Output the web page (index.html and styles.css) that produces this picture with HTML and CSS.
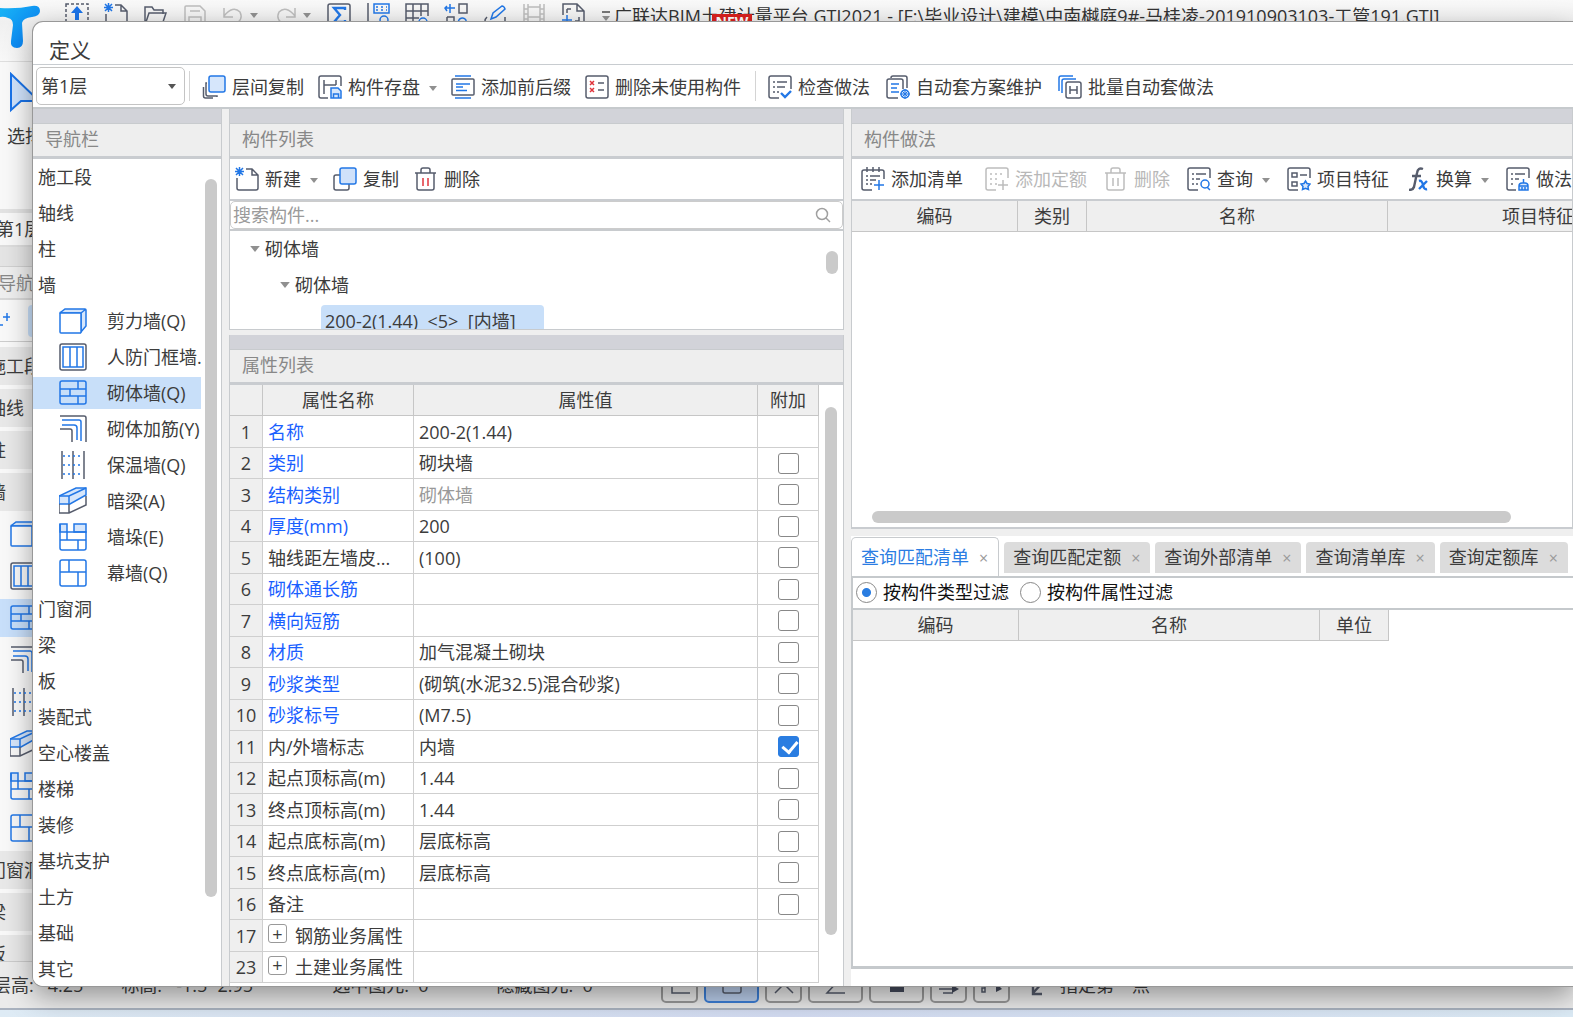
FILE: index.html
```html
<!DOCTYPE html>
<html lang="zh-CN">
<head>
<meta charset="utf-8">
<title>定义</title>
<link rel="stylesheet" href="styles.css">
</head>
<body>
<svg class="sprite" aria-hidden="true">
  <symbol id="caret" viewBox="0 0 8 5"><path d="M0 0h8L4 5z" fill="currentColor"/></symbol>
  <symbol id="floor-copy" viewBox="0 0 24 24"><path d="M5 8H4v11q0 2 2 2h9v1M1.500 12v9q0 2 2 2H11" class="g"/><rect x="7" y="1" width="16" height="16" rx="2" class="b f"/></symbol>
  <symbol id="store" viewBox="0 0 24 24"><path d="M10 23H3q-2 0-2-2V3q0-2 2-2h18q2 0 2 2v8M6 5v14M6 10h12M18 5v5" class="g"/><path d="M13 13h7l3 3v7H13zM15.500 23v-4h5v4" class="b f"/></symbol>
  <symbol id="affix" viewBox="0 0 24 24"><rect x="1" y="4" width="22" height="16" rx="1" class="g"/><path d="M4 1h16M4 23h16M5 9h14M5 12h7M5 15.500h11" class="b"/></symbol>
  <symbol id="unused" viewBox="0 0 24 24"><rect x="1" y="1" width="22" height="22" rx="2" class="g"/><path d="M5 6l4 4M9 6l-4 4M5 13l4 4M9 13l-4 4" class="r"/><path d="M13 8h6M13 15h6" class="g"/></symbol>
  <symbol id="check-list" viewBox="0 0 24 24"><path d="M11 23H3q-2 0-2-2V3q0-2 2-2h18q2 0 2 2v11M5 7h2M9 7h10M5 12h2M9 12h8M5 17h2M9 17h2" class="g"/><path d="M13 18l4 4 6-6" class="b w"/></symbol>
  <symbol id="scheme" viewBox="0 0 24 24"><path d="M5 3q0-2 2-2h12q2 0 2 2v10M12 23H3q-2 0-2-2V6q0-2 2-2h12q2 0 2 2v8" class="g"/><path d="M5 9h8M5 13h6M5 17h8" class="b"/><circle cx="19" cy="19" r="4" class="b f"/><path d="M19 14v10M14 19h10M16 16l6 6M22 16l-6 6" class="b t"/></symbol>
  <symbol id="batch" viewBox="0 0 24 24"><path d="M1 16V3q0-2 2-2h12M4 18V6q0-2 2-2h12" class="b"/><rect x="8" y="7" width="15" height="16" rx="2" class="g"/><path d="M12 11v8M19 11v8M12 15h7" class="g"/></symbol>
  <symbol id="new" viewBox="0 0 24 24"><path d="M2 11v10q0 2 2 2h17q2 0 2-2V8l-6-6h-6M17 2v6h6" class="g"/><path d="M1 1l7 7M8 1L1 8M4.500 0v9M0 4.500h9" class="b"/></symbol>
  <symbol id="copy" viewBox="0 0 24 24"><path d="M7 8H3Q1 8 1 10v11q0 2 2 2h11q2 0 2-2v-4" class="g"/><rect x="7" y="1" width="16" height="16" rx="2" class="b f2"/></symbol>
  <symbol id="trash" viewBox="0 0 24 24"><path d="M1 6h21M7 6V3q0-2 2-2h5q2 0 2 2v3M3 6v15q0 2 2 2h13q2 0 2-2V6" class="g"/><path d="M9 11v8M14 11v8" class="r"/></symbol>
  <symbol id="trash-off" viewBox="0 0 24 24"><path d="M1 6h21M7 6V3q0-2 2-2h5q2 0 2 2v3M3 6v15q0 2 2 2h13q2 0 2-2V6M9 11v8M14 11v8" class="c"/></symbol>
  <symbol id="add-list" viewBox="0 0 24 24"><path d="M11 23H3q-2 0-2-2V5q0-2 2-2h18q2 0 2 2v7M6 0v5M12 0v5M18 0v5M5 9h2M9 9h10M5 13h2M9 13h6M5 17h2M9 17h2" class="g"/><path d="M13 18h10M18 13v10" class="b"/></symbol>
  <symbol id="add-quota" viewBox="0 0 24 24"><path d="M11 23H3q-2 0-2-2V3q0-2 2-2h18q2 0 2 2v8M5 7h2M10 7h2M15 7h2M5 12h2M10 12h2M5 17h2M10 17h2M13 18h10M18 13v10" class="c"/></symbol>
  <symbol id="query" viewBox="0 0 24 24"><path d="M11 23H3q-2 0-2-2V3q0-2 2-2h18q2 0 2 2v8M5 7h2M9 7h10M5 12h2M9 12h4M5 17h2M9 17h2" class="g"/><circle cx="18" cy="17" r="4" class="b"/><path d="M20 20l3 3" class="b"/></symbol>
  <symbol id="feature" viewBox="0 0 24 24"><path d="M11 23H3q-2 0-2-2V3q0-2 2-2h18q2 0 2 2v8M5 6h5v4H5zM5 15h5v4H5zM13 8h7" class="g"/><path d="M18.500 14l1.500 2.500 3 .5-2 2.500.500 3-3-1.200-3 1.200.5-3-2-2.500 3-.5z" class="b f"/></symbol>
  <symbol id="fx" viewBox="0 0 24 24"><path d="M17 2q-5-2-6 4L8 20q-1 3-5 3M6 9h9" class="g w"/><path d="M13 14q3-1 4 4t4 4M21 14l-8 8" class="b w"/></symbol>
  <symbol id="practice" viewBox="0 0 24 24"><path d="M10 23H3q-2 0-2-2V3q0-2 2-2h18q2 0 2 2v8M5 7h2M9 7h10M5 12h2M9 12h4M5 17h2" class="g"/><path d="M17.500 12v4M13 19q0-3 3-3h3q3 0 3 3zM13 19v4h9v-4M16 23v-3M19 23v-3" class="b f"/></symbol>
  <symbol id="search" viewBox="0 0 16 16"><circle cx="7" cy="7" r="5.500" class="m"/><path d="M11 11l4 4" class="m"/></symbol>

  <symbol id="w-shear" viewBox="0 0 28 28"><path d="M1 6q0-1 1-1l4-3h20q1 0 1 1v16l-5 6V6zM22 6l5-4" class="b f"/><rect x="1" y="6" width="21" height="20" rx="1" class="b" style="fill:#fff"/></symbol>
  <symbol id="w-door" viewBox="0 0 28 28"><rect x="1" y="1" width="26" height="26" rx="2" class="g"/><path d="M4 4h20v20H4zM11 4v20M18 4v20" class="b"/></symbol>
  <symbol id="w-brick" viewBox="0 0 28 28"><rect x="1" y="2" width="26" height="23" rx="2" class="b"/><path d="M1 10h26M1 17h26M19 2v8M11 10v7M21 10v0M19 17v8" class="b"/></symbol>
  <symbol id="w-rebar" viewBox="0 0 28 28"><path d="M1 1h24q2 0 2 2v24M1 14h10q2 0 2 2v11" class="g"/><path d="M3 5h17q2 0 2 2v19M3 10h12q3 0 3 3v12" class="b"/></symbol>
  <symbol id="w-insul" viewBox="0 0 28 28"><path d="M3 0v28M14 0v28M25 0v28" class="g"/><path d="M4 5h20M4 14h20M4 23h20" class="b dot"/></symbol>
  <symbol id="w-beam" viewBox="0 0 28 28"><path d="M0 9l17-8h10v7l-16 9H0z" class="b f"/><path d="M0 9h10L27 1M10 9v8" class="b"/><path d="M0 17v9h10l17-8V9M10 17v9" class="g"/></symbol>
  <symbol id="w-pier" viewBox="0 0 28 28"><path d="M1 1h7v8H1zM15 1h12v8H15z" class="b f"/><path d="M1 1v24q0 2 2 2h22q2 0 2-2V9H8v8M1 17h26M19 17v10" class="b"/></symbol>
  <symbol id="w-curtain" viewBox="0 0 28 28"><rect x="1" y="1" width="26" height="26" rx="2" class="b"/><path d="M1 13h26M10 1v12M19 13v14" class="b"/></symbol>

  <symbol id="q-up" viewBox="0 0 24 24"><rect x="1" y="1" width="22" height="22" class="g dash"/><path d="M12 3l6 7h-4v7h-4v-7H6z" fill="#1a73e8"/></symbol>
  <symbol id="q-open" viewBox="0 0 24 24"><path d="M2 22V4h7l2 3h9v4M2 22l4-12h17l-4 12z" class="g"/></symbol>
  <symbol id="q-save" viewBox="0 0 24 24"><path d="M3 4q0-1 1-1h14l5 5v15H3zM8 8h10M7 23v-9h12v9" class="c"/></symbol>
  <symbol id="q-undo" viewBox="0 0 24 24"><path d="M3 5v9h9M3 13q9-11 16-4 4 8-6 13" class="c"/></symbol>
  <symbol id="q-redo" viewBox="0 0 24 24"><path d="M21 5v9h-9M21 13q-9-11-16-4-4 8 6 13" class="c"/></symbol>
  <symbol id="q-sum" viewBox="0 0 24 24"><rect x="1" y="1" width="22" height="22" rx="2" class="g"/><path d="M18 7V5H7l6 7-6 7h11v-2" class="b w"/></symbol>
  <symbol id="q-calc" viewBox="0 0 24 24"><path d="M2 0v21h10" class="g"/><path d="M8 1h15v9H8z" class="b"/><path d="M10 4h11M10 7h11" class="b dot"/><circle cx="18" cy="17" r="4" class="b"/></symbol>
  <symbol id="q-grid" viewBox="0 0 24 24"><path d="M12 22H1V1h22v12M1 8h22M1 15h13M8 1v21M16 1v12" class="g"/><circle cx="18" cy="19" r="4" class="b"/></symbol>
  <symbol id="q-move" viewBox="0 0 24 24"><path d="M15 1h8v9h-8zM3 14h7v8M3 14v8" class="g"/><path d="M1 5h10M6 1v9M3 3L1 5l2 3M18 23a4 4 0 1 1 3-1" class="b"/></symbol>
  <symbol id="q-pen" viewBox="0 0 24 24"><path d="M8 16l2-6 9-7q2 0 3 3l-9 8z" class="b"/><path d="M4 14q-4 4 0 6h18M22 14v5" class="g"/></symbol>
  <symbol id="q-film" viewBox="0 0 24 24"><path d="M2 1v22M6 1v22M18 1v22M22 1v22M6 4h12M6 14h12M2 6h4M2 11h4M2 16h4M18 6h4M18 11h4M18 16h4" class="c"/></symbol>
  <symbol id="q-page" viewBox="0 0 24 24"><path d="M2 12V1h14l7 7v15h-6M16 1v7h7M6 6h4M6 6v4M18 14v4h-4" class="g"/><path d="M1 17h10M6 12v10" class="b"/></symbol>
</svg>

<div class="app">
  <header class="app-top">
    <svg class="logo" viewBox="0 0 42 50"><defs><linearGradient id="lg" x1="0" y1="0" x2="1" y2="1"><stop offset="0" stop-color="#19b5f5"/><stop offset="1" stop-color="#0877f2"/></linearGradient></defs><path d="M0 8q18 1 32-2 8-1 8 5 0 5-8 6-9 1-10 6l1 18q0 7-6 7-7 0-6-7l2-16q0-6-5-7-4-2-8-1z" fill="url(#lg)"/></svg>
    <nav class="quick" aria-label="快速访问">
      <svg><use href="#q-up"/></svg><svg><use href="#new"/></svg><svg><use href="#q-open"/></svg><svg><use href="#q-save"/></svg>
      <span class="undo"><svg><use href="#q-undo"/></svg><svg class="caret"><use href="#caret"/></svg></span>
      <span class="undo"><svg><use href="#q-redo"/></svg><svg class="caret"><use href="#caret"/></svg></span>
      <svg><use href="#q-sum"/></svg><svg><use href="#q-calc"/></svg><svg><use href="#q-grid"/></svg><svg><use href="#q-move"/></svg><svg><use href="#q-pen"/></svg><svg><use href="#q-film"/></svg><svg><use href="#q-page"/></svg>
    </nav>
    <div class="app-title"><span class="more"><svg class="caret"><use href="#caret"/></svg></span>广联达BIM土建计量平台 GTJ2021 - [F:\毕业设计\建模\中南樾庭9#-马桂凌-201910903103-工管191.GTJ]<span class="new-badge">NEW</span></div>
  </header>
  <div class="app-ribbon">
    <svg viewBox="0 0 36 42"><path d="M2 2v36l10-9h18z" fill="#cfe2fb" stroke="#1a73e8" stroke-width="2"/></svg>
    <span>选择</span>
  </div>
  <aside class="app-side">
    <div class="side-floor">第1层</div>
    <div class="side-strip"></div>
    <div class="side-head">导航栏</div>
    <div class="side-tools"><svg viewBox="0 0 16 20"><path d="M9 6h8M13 2v8M1 14h8M5 10v8" class="b"/></svg><i></i></div>
    <ul class="side-list">
      <li>施工段</li><li>轴线</li><li>柱</li><li>墙</li>
      <li class="pic"><svg><use href="#w-shear"/></svg></li>
      <li class="pic"><svg><use href="#w-door"/></svg></li>
      <li class="pic on"><svg><use href="#w-brick"/></svg></li>
      <li class="pic"><svg><use href="#w-rebar"/></svg></li>
      <li class="pic"><svg><use href="#w-insul"/></svg></li>
      <li class="pic"><svg><use href="#w-beam"/></svg></li>
      <li class="pic"><svg><use href="#w-pier"/></svg></li>
      <li class="pic"><svg><use href="#w-curtain"/></svg></li>
      <li>门窗洞</li><li>梁</li><li>板</li>
    </ul>
  </aside>
  <footer class="app-status">
    <div class="readouts"><span>层高:&nbsp;&nbsp; 4.25</span><span>标高:&nbsp;&nbsp; -1.5~2.95</span><span>选中图元:&nbsp; 0</span><span>隐藏图元:&nbsp; 0</span></div>
    <div class="modes">
      <button type="button" aria-label="正交"><svg viewBox="0 0 24 24"><path d="M4 2v18h18M4 12h16" class="g"/></svg></button>
      <button type="button" class="wide on" aria-label="捕捉"><svg viewBox="0 0 24 24"><rect x="3" y="3" width="18" height="17" rx="2" class="g"/></svg></button>
      <button type="button" aria-label="交点"><svg viewBox="0 0 24 24"><path d="M3 20l9-9 9 9" class="g"/></svg></button>
      <button type="button" class="wide" aria-label="角度"><svg viewBox="0 0 24 24"><path d="M18 4L3 20h18" class="g"/></svg></button>
      <button type="button" class="wide" aria-label="显示"><svg viewBox="0 0 24 24"><path d="M5 12h14v7H5z" fill="#454b5c"/></svg></button>
      <button type="button" aria-label="图层"><svg viewBox="0 0 24 24"><path d="M2 12h13M2 16h13M6 20h10" class="g"/><path d="M15 12l7 4-7 4z" fill="#454b5c"/></svg></button>
      <button type="button" aria-label="选择"><svg viewBox="0 0 24 24"><path d="M5 12v7H2v-4h3" class="g"/><path d="M16 10l6 6-6 3z" fill="#454b5c"/></svg></button>
    </div>
    <div class="hint"><svg viewBox="0 0 16 24"><path d="M14 8L3 20M3 10v11h9" class="g w"/></svg>指定第一点</div>
  </footer>
  <div class="taskbar"></div>
</div>

<main class="dialog" role="dialog" aria-labelledby="dlg-title">
  <h1 id="dlg-title">定义</h1>
  <div class="toolbar main-tools">
    <div class="select"><select aria-label="楼层"><option>第1层</option></select><svg class="caret"><use href="#caret"/></svg></div>
    <span class="sep"></span>
    <button type="button" class="tool"><svg><use href="#floor-copy"/></svg>层间复制</button>
    <button type="button" class="tool"><svg><use href="#store"/></svg>构件存盘<svg class="caret"><use href="#caret"/></svg></button>
    <button type="button" class="tool"><svg><use href="#affix"/></svg>添加前后缀</button>
    <button type="button" class="tool"><svg><use href="#unused"/></svg>删除未使用构件</button>
    <span class="sep"></span>
    <div class="tool-group">
      <button type="button" class="tool"><svg><use href="#check-list"/></svg>检查做法</button>
      <button type="button" class="tool"><svg><use href="#scheme"/></svg>自动套方案维护</button>
      <button type="button" class="tool"><svg><use href="#batch"/></svg>批量自动套做法</button>
    </div>
  </div>

  <div class="work">
    <section class="panel nav">
      <div class="strip"></div>
      <h2>导航栏</h2>
      <div class="nav-body">
        <ul class="nav-list">
          <li>施工段</li><li>轴线</li><li>柱</li><li>墙</li>
          <li class="child"><svg><use href="#w-shear"/></svg>剪力墙(Q)</li>
          <li class="child"><svg><use href="#w-door"/></svg>人防门框墙...</li>
          <li class="child on"><svg><use href="#w-brick"/></svg>砌体墙(Q)</li>
          <li class="child"><svg><use href="#w-rebar"/></svg>砌体加筋(Y)</li>
          <li class="child"><svg><use href="#w-insul"/></svg>保温墙(Q)</li>
          <li class="child"><svg><use href="#w-beam"/></svg>暗梁(A)</li>
          <li class="child"><svg><use href="#w-pier"/></svg>墙垛(E)</li>
          <li class="child"><svg><use href="#w-curtain"/></svg>幕墙(Q)</li>
          <li>门窗洞</li><li>梁</li><li>板</li><li>装配式</li><li>空心楼盖</li><li>楼梯</li><li>装修</li><li>基坑支护</li><li>土方</li><li>基础</li><li>其它</li>
        </ul>
        <div class="bar nav-bar"></div>
      </div>
    </section>

    <div class="middle">
      <section class="panel">
        <div class="strip"></div>
        <h2>构件列表</h2>
        <div class="toolbar sub-tools">
          <button type="button" class="tool"><svg><use href="#new"/></svg>新建<svg class="caret"><use href="#caret"/></svg></button>
          <button type="button" class="tool"><svg><use href="#copy"/></svg>复制</button>
          <button type="button" class="tool"><svg><use href="#trash"/></svg>删除</button>
        </div>
        <label class="search"><input type="text" placeholder="搜索构件..." aria-label="搜索构件"><svg><use href="#search"/></svg></label>
        <div class="tree">
          <ul>
            <li><svg class="caret"><use href="#caret"/></svg>砌体墙</li>
            <li class="l2"><svg class="caret"><use href="#caret"/></svg>砌体墙</li>
            <li class="l3"><span>200-2(1.44)&nbsp; &lt;5&gt;&nbsp; [内墙]</span></li>
          </ul>
          <div class="bar tree-bar"></div>
        </div>
      </section>

      <section class="panel props">
        <div class="strip"></div>
        <h2>属性列表</h2>
        <div class="props-body">
          <table class="grid">
            <colgroup><col class="c-no"><col class="c-name"><col><col class="c-add"></colgroup>
            <thead><tr><th></th><th>属性名称</th><th>属性值</th><th>附加</th></tr></thead>
            <tbody>
              <tr><th>1</th><td class="key">名称</td><td>200-2(1.44)</td><td></td></tr>
              <tr><th>2</th><td class="key">类别</td><td>砌块墙</td><td><input type="checkbox" aria-label="类别"></td></tr>
              <tr><th>3</th><td class="key">结构类别</td><td class="dim">砌体墙</td><td><input type="checkbox" aria-label="结构类别"></td></tr>
              <tr><th>4</th><td class="key">厚度(mm)</td><td>200</td><td><input type="checkbox" aria-label="厚度"></td></tr>
              <tr><th>5</th><td>轴线距左墙皮...</td><td>(100)</td><td><input type="checkbox" aria-label="轴线距左墙皮"></td></tr>
              <tr><th>6</th><td class="key">砌体通长筋</td><td></td><td><input type="checkbox" aria-label="砌体通长筋"></td></tr>
              <tr><th>7</th><td class="key">横向短筋</td><td></td><td><input type="checkbox" aria-label="横向短筋"></td></tr>
              <tr><th>8</th><td class="key">材质</td><td>加气混凝土砌块</td><td><input type="checkbox" aria-label="材质"></td></tr>
              <tr><th>9</th><td class="key">砂浆类型</td><td>(砌筑(水泥32.5)混合砂浆)</td><td><input type="checkbox" aria-label="砂浆类型"></td></tr>
              <tr><th>10</th><td class="key">砂浆标号</td><td>(M7.5)</td><td><input type="checkbox" aria-label="砂浆标号"></td></tr>
              <tr><th>11</th><td>内/外墙标志</td><td>内墙</td><td><input type="checkbox" checked aria-label="内/外墙标志"></td></tr>
              <tr><th>12</th><td>起点顶标高(m)</td><td>1.44</td><td><input type="checkbox" aria-label="起点顶标高"></td></tr>
              <tr><th>13</th><td>终点顶标高(m)</td><td>1.44</td><td><input type="checkbox" aria-label="终点顶标高"></td></tr>
              <tr><th>14</th><td>起点底标高(m)</td><td>层底标高</td><td><input type="checkbox" aria-label="起点底标高"></td></tr>
              <tr><th>15</th><td>终点底标高(m)</td><td>层底标高</td><td><input type="checkbox" aria-label="终点底标高"></td></tr>
              <tr><th>16</th><td>备注</td><td></td><td><input type="checkbox" aria-label="备注"></td></tr>
              <tr><th>17</th><td><button type="button" class="expand">+</button>钢筋业务属性</td><td></td><td></td></tr>
              <tr><th>23</th><td><button type="button" class="expand">+</button>土建业务属性</td><td></td><td></td></tr>
            </tbody>
          </table>
          <div class="bar props-bar"></div>
        </div>
      </section>
    </div>

    <div class="right">
      <section class="panel practice">
        <div class="strip"></div>
        <h2>构件做法</h2>
        <div class="toolbar practice-tools">
          <button type="button" class="tool first"><svg><use href="#add-list"/></svg>添加清单</button>
          <button type="button" class="tool" disabled><svg><use href="#add-quota"/></svg>添加定额</button>
          <button type="button" class="tool" disabled><svg><use href="#trash-off"/></svg>删除</button>
          <button type="button" class="tool"><svg><use href="#query"/></svg>查询<svg class="caret"><use href="#caret"/></svg></button>
          <button type="button" class="tool"><svg><use href="#feature"/></svg>项目特征</button>
          <button type="button" class="tool"><svg><use href="#fx"/></svg>换算<svg class="caret"><use href="#caret"/></svg></button>
          <button type="button" class="tool"><svg><use href="#practice"/></svg>做法刷</button>
        </div>
        <table class="grid bill">
          <colgroup><col class="b-code"><col class="b-kind"><col class="b-name"><col class="b-name"></colgroup>
          <thead><tr><th>编码</th><th>类别</th><th>名称</th><th>项目特征</th></tr></thead>
        </table>
        <div class="bar wide-bar"></div>
      </section>

      <section class="queries">
        <div class="tabs" role="tablist">
          <button type="button" role="tab" aria-selected="true">查询匹配清单<span>×</span></button>
          <button type="button" role="tab">查询匹配定额<span>×</span></button>
          <button type="button" role="tab">查询外部清单<span>×</span></button>
          <button type="button" role="tab">查询清单库<span>×</span></button>
          <button type="button" role="tab">查询定额库<span>×</span></button>
        </div>
        <div class="query-page">
          <div class="filters">
            <label><input type="radio" name="filter" checked>按构件类型过滤</label>
            <label><input type="radio" name="filter">按构件属性过滤</label>
          </div>
          <table class="grid match">
            <colgroup><col class="b-code"><col class="b-name"><col class="b-kind"></colgroup>
            <thead><tr><th>编码</th><th>名称</th><th>单位</th></tr></thead>
          </table>
        </div>
      </section>
    </div>
  </div>
</main>
</body>
</html>
```
FILE: styles.css
```css
* { box-sizing: border-box; }

body {
  margin: 0;
  height: 100vh;
  overflow: hidden;
  position: relative;
  font: 18px/24px "Open Sans", "Noto Sans CJK SC", sans-serif;
  color: #3c3c3c;
  background: #f8f8f8;
}

ul { list-style: none; margin: 0; padding: 0; }
button, input, select { font: inherit; color: inherit; margin: 0; }
button { border: 0; background: none; padding: 0; white-space: nowrap; }

.sprite { position: absolute; width: 0; height: 0; }
svg { flex: none; width: 24px; height: 24px; }
.g, .b, .r, .c, .m { fill: none; stroke-width: 1.5; }
.g { stroke: #565c6c; }
.b { stroke: #2277e6; }
.r { stroke: #e0343c; }
.c { stroke: #bdbdbd; }
.m { stroke: #a0a0a0; }
.f { fill: #d6e6fb; }
.f2 { fill: #cfe1fa; }
.w { stroke-width: 2.4; }
.t { stroke-width: 1; }
.dot { stroke-dasharray: 2 3; }
.dash { stroke-dasharray: 3 2; }
svg.caret { width: 8px; height: 5px; color: #909090; }

/* ---- application window behind the dialog ---- */
.app { height: 100%; display: flex; flex-direction: column; }
.app-top {
  flex: none;
  height: 62px;
  display: flex;
  align-items: flex-start;
  background: linear-gradient(#f9f9f9, #f0f0f0 22px, #f8f8f8);
  border-bottom: 1px solid #dedede;
}
.logo { width: 42px; height: 50px; }
.quick { display: flex; gap: 15px; padding: 3px 0 0 23px; }
.undo { display: flex; align-items: center; gap: 5px; width: 38px; }
.app-title {
  position: relative;
  display: flex;
  align-items: center;
  white-space: pre;
  padding: 4px 0 0 17px;
  color: #333;
}
.more { border-top: 2px solid #777; padding-top: 3px; margin-right: 4px; display: flex; }
.new-badge {
  position: absolute;
  left: 127px;
  top: 14px;
  width: 40px;
  height: 20px;
  line-height: 15px;
  background: #d9211e;
  color: #fff;
  font-size: 14px;
  font-weight: 700;
  text-align: center;
}
.app-ribbon {
  flex: none;
  height: 151px;
  display: flex;
  flex-direction: column;
  gap: 10px;
  padding: 10px 7px;
  border-bottom: 4px solid #e2e2e2;
}
.app-ribbon svg { width: 36px; height: 42px; margin-left: 2px; }
.app-side { flex: 1; min-height: 0; overflow: hidden; margin-left: -12px; width: 230px; }
.side-floor { height: 34px; line-height: 32px; padding-left: 8px; border-bottom: 2px solid #ddd; }
.side-strip { height: 20px; background: #e4e4e4; border-bottom: 1px solid #d0d0d0; }
.side-head { height: 33px; line-height: 32px; padding-left: 10px; color: #888; background: #eee; border-bottom: 2px solid #d8d8d8; }
.side-tools { height: 42px; display: flex; align-items: center; gap: 18px; padding-left: 6px; border-bottom: 1px solid #ccc; }
.side-tools svg { width: 16px; height: 20px; }
.side-tools i { width: 32px; height: 32px; border-radius: 4px; background: #c8dffa; }
.side-list { padding-top: 5px; }
.side-list li { height: 38px; line-height: 38px; margin-bottom: 4px; background: #e8e8e8; }
.side-list .pic { display: flex; align-items: center; padding-left: 22px; background: none; }
.side-list .pic svg { width: 28px; height: 28px; }
.side-list .on { background: #c8dffa; }
.app-status {
  flex: none;
  height: 49px;
  display: flex;
  align-items: center;
  background: #ebebeb;
  border-top: 1px solid #ccc;
  border-bottom: 2px solid #a9b2bf;
}
.readouts { display: flex; gap: 38px; width: 661px; margin-left: -12px; padding-left: 5px; white-space: nowrap; flex: none; }
.readouts span:nth-child(3) { margin-left: 41px; }
.readouts span:nth-child(4) { margin-left: 30px; }
.modes { display: flex; gap: 6px; padding-left: 12px; }
.modes button { width: 37px; height: 36px; display: flex; justify-content: center; align-items: center; border: 2px solid #999; border-radius: 5px; }
.modes .wide { width: 55px; }
.modes .on { border-color: #3c7fd8; background: #bcd0ee; }
.hint { display: flex; align-items: center; gap: 14px; padding-left: 20px; white-space: nowrap; }
.hint svg { width: 16px; }
.taskbar { flex: none; height: 7px; background: linear-gradient(90deg, #deebf5, #d3dcf2 50%, #dcebf6); }

/* ---- definition dialog ---- */
.dialog {
  position: absolute;
  inset: 22px 0 31px 33px;
  display: flex;
  flex-direction: column;
  overflow: hidden;
  background: #fff;
  border-radius: 10px 0 0 10px;
  box-shadow: 0 0 0 1px #989898, 0 10px 28px rgba(0, 0, 0, .38);
}
h1 {
  flex: none;
  height: 43px;
  margin: 0;
  padding: 14px 16px 0;
  border-bottom: 1px solid #c8ccd0;
  font-size: 21px;
  line-height: 28px;
  font-weight: 400;
}
.toolbar { flex: none; display: flex; align-items: center; }
.main-tools { height: 44px; gap: 14px; border-bottom: 2px solid #c6cacd; padding-left: 3px; }
.tool { display: flex; align-items: center; gap: 6px; }
.main-tools .tool { padding-top: 2px; }
.tool .caret { margin: 2px 0 0 3px; }
.tool:disabled { color: #b8b8b8; }
.tool-group { display: flex; gap: 16px; }
.sep { width: 1px; height: 30px; background: #d4d4d4; }
.main-tools .select + .sep { margin: 0 -2px 0 -10px; }
.sep:has(+ .tool-group) { margin-right: -2px; }
.select { position: relative; width: 149px; }
.select select {
  display: block;
  width: 100%;
  height: 38px;
  padding: 0 4px;
  appearance: none;
  border: 1px solid #c4c4c4;
  border-radius: 5px;
  background: #fff;
}
.select .caret { position: absolute; right: 9px; top: 17px; color: #555; }

.work {
  flex: 1;
  min-height: 0;
  display: grid;
  grid-template-columns: 189px 615px minmax(0, 1fr);
  column-gap: 7px;
  background: #efefef;
}
.panel { display: flex; flex-direction: column; background: #fff; border: solid #c8cbce; border-width: 0 1px; min-height: 0; }
.strip { flex: none; height: 15px; background: #d2d3d9; border-bottom: 1px solid #c8cbce; }
h2 {
  flex: none;
  height: 35px;
  margin: 0;
  padding-left: 12px;
  font-size: 18px;
  line-height: 31px;
  font-weight: 400;
  color: #888;
  background: #eee;
  border-bottom: 3px solid #c9ccd0;
}
.bar { flex: none; background: #cacaca; border-radius: 6px; }

.nav { border-left: 0; }
.nav-body { flex: 1; min-height: 0; display: flex; gap: 4px; overflow: hidden; }
.nav-list { width: 168px; }
.nav-list li { height: 32px; line-height: 32px; margin: 2px 0 4px; padding-left: 5px; white-space: nowrap; }
.nav-list .child { display: flex; align-items: center; gap: 20px; padding-left: 26px; overflow: hidden; }
.nav-list svg { width: 28px; height: 28px; }
.nav-list .on { background: #c8dff9; }
.nav-bar { width: 12px; height: 718px; margin-top: 20px; }

.middle, .right { display: flex; flex-direction: column; min-height: 0; min-width: 0; }
.middle { gap: 5px; }
.sub-tools { height: 42px; gap: 15px; padding-left: 5px; border-bottom: 2px solid #c9ccd0; }
.search { flex: none; height: 28px; display: flex; align-items: center; padding: 0 11px 0 2px; border: 1px solid #ccc; border-radius: 5px; }
.search input { flex: 1; min-width: 0; height: 24px; padding: 0; border: 0; outline: 0; background: none; }
.search input::placeholder { color: #9a9a9a; opacity: 1; }
.search svg { width: 16px; height: 16px; }
.tree { flex: none; height: 101px; display: flex; overflow: hidden; border: solid #c8cbce; border-width: 2px 0 1px; }
.tree ul { flex: 1; }
.tree li { height: 36px; display: flex; align-items: center; gap: 5px; padding-left: 20px; }
.tree .l2 { padding-left: 50px; }
.tree .l3 { padding-left: 91px; }
.tree li .caret { width: 10px; height: 6px; }
.l3 span { width: 223px; height: 32px; line-height: 32px; padding-left: 4px; border-radius: 4px; background: #c8dff9; }
.tree-bar { width: 12px; height: 23px; margin: 20px 5px 0 0; }

.props { flex: 1; }
.props-body { flex: 1; min-height: 0; overflow: hidden; display: flex; gap: 6px; }
.props-bar { width: 12px; height: 528px; margin-top: 22px; }

.grid { table-layout: fixed; border-collapse: separate; border-spacing: 0; }
.grid th, .grid td { padding: 0; border: solid #cfcfcf; border-width: 0 1px 1px 0; font-weight: 400; white-space: nowrap; overflow: hidden; }
.grid th { background: #efefef; }
.grid thead th { height: 31px; border-color: #c6c6c6; }
.props .grid { width: 589px; height: 0; }
.c-no { width: 33px; }
.c-name { width: 151px; }
.c-add { width: 61px; }
.grid tbody tr { height: 32px; }
.grid tbody tr:nth-child(even) { height: 31px; }
.grid tbody td { padding-left: 5px; }
.grid tbody td:last-child { padding: 0; text-align: center; }
.key { color: #1a5fff; }
.dim { color: #999; }

input[type="checkbox"] {
  appearance: none;
  display: block;
  width: 21px;
  height: 21px;
  margin: 0 auto;
  border: 1px solid #888;
  border-radius: 3px;
  background: #fff;
}
input[type="checkbox"]:checked { background: #2a7de1; border-color: #2a7de1; }
input[type="checkbox"]:checked::after {
  content: "";
  display: block;
  width: 7px;
  height: 12px;
  margin: 1px 0 0 6px;
  border: solid #fff;
  border-width: 0 3px 3px 0;
  transform: rotate(40deg);
}
.expand {
  width: 19px;
  height: 19px;
  margin-right: 8px;
  border: 1px solid #999;
  border-radius: 3px;
  line-height: 16px;
  vertical-align: 2px;
}

.practice { flex: none; height: 420px; border-bottom: 2px solid #c9ccd0; overflow: hidden; }
.practice-tools { height: 42px; gap: 17px; padding-left: 9px; border-bottom: 2px solid #c9ccd0; }
.practice-tools .tool { flex: none; }
.tool.first { padding-right: 5px; }
.bill { width: 837px; flex: none; }
.b-code { width: 166px; }
.b-kind { width: 69px; }
.b-name { width: 301px; }
.wide-bar { width: 639px; height: 12px; margin: auto 0 4px 20px; }

.queries { flex: 1; min-height: 0; display: flex; flex-direction: column; padding: 7px 0 17px; background: linear-gradient(#efefef 7px, #fff 7px); }
.tabs { flex: none; height: 40px; display: flex; gap: 5px; align-items: flex-start; padding-top: 1px; }
.tabs button { height: 31px; margin-top: 5px; padding: 0 10px 0 9px; border-radius: 4px 4px 0 0; background: #dcdcdc; line-height: 31px; }
.tabs button span { margin-left: 10px; font-size: 16px; color: #999; }
.tabs [aria-selected] { height: 39px; margin-top: 0; padding: 0 10px 0 9px; line-height: 38px; background: #fff; color: #2b7de3; border: 1px solid #c8cbce; border-bottom: 0; border-radius: 5px 5px 0 0; }
.query-page { flex: 1; min-height: 0; border: solid #c5c9cc; border-width: 2px 0 3px 2px; background: #fff; }
.filters { height: 32px; display: flex; gap: 11px; padding: 0 0 2px 3px; border-bottom: 2px solid #c5c9cc; color: #111; }
.filters label { display: flex; align-items: center; gap: 6px; }
input[type="radio"] { appearance: none; width: 21px; height: 21px; border: 1px solid #888; border-radius: 50%; background: #fff; }
input[type="radio"]:checked { background: radial-gradient(circle, #2a7de1 4px, #fff 5px); }
.match { width: 536px; }
```
